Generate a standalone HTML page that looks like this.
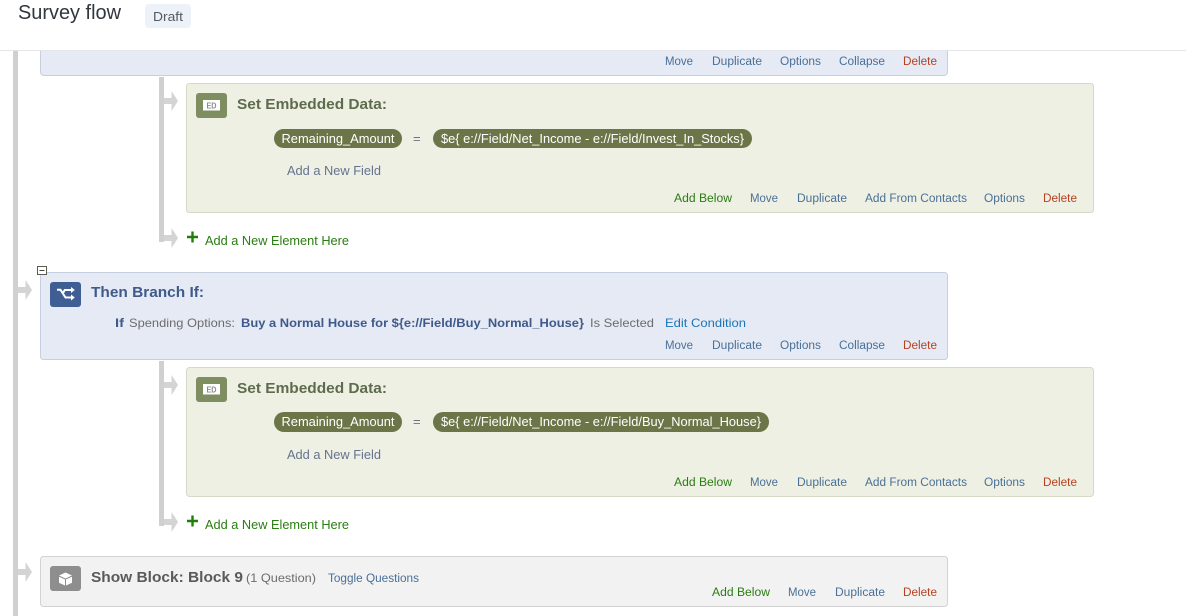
<!DOCTYPE html>
<html>
<head>
<meta charset="utf-8">
<style>
html,body{margin:0;padding:0;background:#fff;width:1186px;height:616px;overflow:hidden}
svg{display:block}
text{font-family:"Liberation Sans",sans-serif;white-space:pre}
.a{font-size:11.5px;fill:#4a7097}
.d{font-size:11.5px;fill:#b8401f}
.g{font-size:11.5px;fill:#2a7d12}
.h{font-size:15px;font-weight:bold}
.p{font-size:13px;fill:#fff}
.n{font-size:12.5px;fill:#66738f}
.e{font-size:12.5px;fill:#2a7d12}
</style>
</head>
<body>
<svg width="1186" height="616" viewBox="0 0 1186 616" xmlns="http://www.w3.org/2000/svg">
<rect width="1186" height="616" fill="#fff"/>

<!-- main rail -->
<rect x="13" y="51" width="5" height="565" fill="#d0d0d0"/>
<path d="M18 287h7.500v-7l6.500 10-6.500 10v-7h-7.500z" fill="#d4d4d4"/>
<path d="M18 569h7.500v-7l6.500 10-6.500 10v-7h-7.500z" fill="#d4d4d4"/>

<!-- top blue block -->
<path d="M40.500 50v22a3.500 3.500 0 0 0 3.500 3.500h900a3.500 3.500 0 0 0 3.500-3.500v-22z" fill="#e5eaf5" stroke="#c6cfe0"/>
<text class="a" x="665" y="65" textLength="28" lengthAdjust="spacingAndGlyphs">Move</text>
<text class="a" x="712" y="65" textLength="50" lengthAdjust="spacingAndGlyphs">Duplicate</text>
<text class="a" x="780" y="65" textLength="41" lengthAdjust="spacingAndGlyphs">Options</text>
<text class="a" x="839" y="65" textLength="46" lengthAdjust="spacingAndGlyphs">Collapse</text>
<text class="d" x="903" y="65" textLength="34" lengthAdjust="spacingAndGlyphs">Delete</text>

<!-- inner rail 1 -->
<rect x="159" y="77" width="5" height="165" fill="#d0d0d0"/>
<path d="M164 98h7.500v-7l6.500 10-6.500 10v-7h-7.500z" fill="#d4d4d4"/>
<path d="M164 235h7.500v-7l6.500 10-6.500 10v-7h-7.500z" fill="#d4d4d4"/>

<!-- ED block 1 -->
<rect x="186.500" y="83.500" width="907" height="129" rx="3" fill="#edf0e3" stroke="#d4dac6"/>
<rect x="196" y="93" width="31" height="25" rx="3" fill="#7f8e60"/>
<rect x="203" y="100" width="17" height="10.500" fill="#fff"/>
<text x="206.500" y="108.500" font-size="8.500" font-weight="bold" fill="#8b8b8b" textLength="10" lengthAdjust="spacingAndGlyphs">ED</text>
<text class="h" x="237" y="109" fill="#5f6b4d" textLength="150" lengthAdjust="spacingAndGlyphs">Set Embedded Data:</text>
<rect x="274" y="129" width="128" height="19" rx="9.500" fill="#6b7548"/>
<text class="p" x="281.500" y="143" textLength="113" lengthAdjust="spacingAndGlyphs">Remaining_Amount</text>
<text x="413" y="143" font-size="13" fill="#6b7280">=</text>
<rect x="433" y="129" width="319" height="19" rx="9.500" fill="#6b7548"/>
<text class="p" x="441" y="143" textLength="303" lengthAdjust="spacingAndGlyphs">$e{ e://Field/Net_Income - e://Field/Invest_In_Stocks}</text>
<text class="n" x="287" y="175" textLength="94" lengthAdjust="spacingAndGlyphs">Add a New Field</text>
<text class="g" x="674" y="202" textLength="58" lengthAdjust="spacingAndGlyphs">Add Below</text>
<text class="a" x="750" y="202" textLength="28" lengthAdjust="spacingAndGlyphs">Move</text>
<text class="a" x="797" y="202" textLength="50" lengthAdjust="spacingAndGlyphs">Duplicate</text>
<text class="a" x="865" y="202" textLength="102" lengthAdjust="spacingAndGlyphs">Add From Contacts</text>
<text class="a" x="984" y="202" textLength="41" lengthAdjust="spacingAndGlyphs">Options</text>
<text class="d" x="1043" y="202" textLength="34" lengthAdjust="spacingAndGlyphs">Delete</text>

<!-- add element 1 -->
<path d="M187 237h11M192.500 231.500v11" stroke="#1f7d0a" stroke-width="2.400" fill="none"/>
<text class="e" x="205" y="245" textLength="144" lengthAdjust="spacingAndGlyphs">Add a New Element Here</text>

<!-- Then branch -->
<rect x="40.500" y="272.500" width="907" height="87" rx="3" fill="#e5eaf5" stroke="#c6cfe0"/>
<rect x="37.500" y="266.500" width="9" height="8" fill="#fff" stroke="#5c5c50"/>
<path d="M39.500 270.500h5" stroke="#444" stroke-width="1"/>
<rect x="50" y="282" width="31" height="25" rx="3" fill="#3f5f94"/>
<path d="M57 289.800h3.500l5 7.700h6M62.800 293.200l2-3.200h6.500" fill="none" stroke="#fff" stroke-width="2"/>
<path d="M71 287l3.800 3-3.800 3zM71 294.500l3.800 3-3.800 3z" fill="#fff"/>
<text class="h" x="91" y="297" fill="#3f5a8a" textLength="113" lengthAdjust="spacingAndGlyphs">Then Branch If:</text>
<text x="115" y="327" font-size="12" font-weight="bold" fill="#3f5a8a" textLength="9" lengthAdjust="spacingAndGlyphs">If</text>
<text x="129" y="327" font-size="12" fill="#6c6c6c" textLength="106" lengthAdjust="spacingAndGlyphs">Spending Options:</text>
<text x="241" y="327" font-size="12" font-weight="bold" fill="#3f5a8a" textLength="343" lengthAdjust="spacingAndGlyphs">Buy a Normal House for ${e://Field/Buy_Normal_House}</text>
<text x="590" y="327" font-size="12" fill="#6c6c6c" textLength="64" lengthAdjust="spacingAndGlyphs">Is Selected</text>
<text x="665" y="327" font-size="12" fill="#1b75b5" textLength="81" lengthAdjust="spacingAndGlyphs">Edit Condition</text>
<text class="a" x="665" y="349" textLength="28" lengthAdjust="spacingAndGlyphs">Move</text>
<text class="a" x="712" y="349" textLength="50" lengthAdjust="spacingAndGlyphs">Duplicate</text>
<text class="a" x="780" y="349" textLength="41" lengthAdjust="spacingAndGlyphs">Options</text>
<text class="a" x="839" y="349" textLength="46" lengthAdjust="spacingAndGlyphs">Collapse</text>
<text class="d" x="903" y="349" textLength="34" lengthAdjust="spacingAndGlyphs">Delete</text>

<!-- inner rail 2 -->
<rect x="159" y="361" width="5" height="165" fill="#d0d0d0"/>
<path d="M164 382h7.500v-7l6.500 10-6.500 10v-7h-7.500z" fill="#d4d4d4"/>
<path d="M164 519h7.500v-7l6.500 10-6.500 10v-7h-7.500z" fill="#d4d4d4"/>

<!-- ED block 2 -->
<rect x="186.500" y="367.500" width="907" height="129" rx="3" fill="#edf0e3" stroke="#d4dac6"/>
<rect x="196" y="377" width="31" height="25" rx="3" fill="#7f8e60"/>
<rect x="203" y="384" width="17" height="10.500" fill="#fff"/>
<text x="206.500" y="392.500" font-size="8.500" font-weight="bold" fill="#8b8b8b" textLength="10" lengthAdjust="spacingAndGlyphs">ED</text>
<text class="h" x="237" y="393" fill="#5f6b4d" textLength="150" lengthAdjust="spacingAndGlyphs">Set Embedded Data:</text>
<rect x="274" y="412" width="128" height="20" rx="10" fill="#6b7548"/>
<text class="p" x="281.500" y="426" textLength="113" lengthAdjust="spacingAndGlyphs">Remaining_Amount</text>
<text x="413" y="426" font-size="13" fill="#6b7280">=</text>
<rect x="433" y="412" width="336" height="20" rx="10" fill="#6b7548"/>
<text class="p" x="441" y="426" textLength="320" lengthAdjust="spacingAndGlyphs">$e{ e://Field/Net_Income - e://Field/Buy_Normal_House}</text>
<text class="n" x="287" y="459" textLength="94" lengthAdjust="spacingAndGlyphs">Add a New Field</text>
<text class="g" x="674" y="486" textLength="58" lengthAdjust="spacingAndGlyphs">Add Below</text>
<text class="a" x="750" y="486" textLength="28" lengthAdjust="spacingAndGlyphs">Move</text>
<text class="a" x="797" y="486" textLength="50" lengthAdjust="spacingAndGlyphs">Duplicate</text>
<text class="a" x="865" y="486" textLength="102" lengthAdjust="spacingAndGlyphs">Add From Contacts</text>
<text class="a" x="984" y="486" textLength="41" lengthAdjust="spacingAndGlyphs">Options</text>
<text class="d" x="1043" y="486" textLength="34" lengthAdjust="spacingAndGlyphs">Delete</text>

<!-- add element 2 -->
<path d="M187 521h11M192.500 515.500v11" stroke="#1f7d0a" stroke-width="2.400" fill="none"/>
<text class="e" x="205" y="529" textLength="144" lengthAdjust="spacingAndGlyphs">Add a New Element Here</text>

<!-- Show block -->
<rect x="40.500" y="556.500" width="907" height="50" rx="3" fill="#f2f2f2" stroke="#d2d2d2"/>
<rect x="50" y="566" width="31" height="25" rx="3" fill="#8e8e8e"/>
<path d="M65.500 572.500l6.500 3-6.500 3-6.500-3z" fill="#fff"/>
<path d="M59 576.700l6 2.700v6.100l-6-2.800zM72 576.700l-6 2.700v6.100l6-2.800z" fill="#fff"/>
<text class="h" x="91" y="582" fill="#5a5a5a" textLength="152" lengthAdjust="spacingAndGlyphs">Show Block: Block 9</text>
<text x="246" y="582" font-size="12" fill="#6c6c6c" textLength="70" lengthAdjust="spacingAndGlyphs">(1 Question)</text>
<text class="a" x="328" y="582" textLength="91" lengthAdjust="spacingAndGlyphs">Toggle Questions</text>
<text class="g" x="712" y="596" textLength="58" lengthAdjust="spacingAndGlyphs">Add Below</text>
<text class="a" x="788" y="596" textLength="28" lengthAdjust="spacingAndGlyphs">Move</text>
<text class="a" x="835" y="596" textLength="50" lengthAdjust="spacingAndGlyphs">Duplicate</text>
<text class="d" x="903" y="596" textLength="34" lengthAdjust="spacingAndGlyphs">Delete</text>

<!-- header -->
<rect x="0" y="0" width="1186" height="50" fill="#fff"/>
<rect x="0" y="50" width="1186" height="1" fill="#e3e5e9"/>
<text x="18" y="19" font-size="20" fill="#32363d" textLength="103" lengthAdjust="spacingAndGlyphs">Survey flow</text>
<rect x="145" y="4" width="46" height="24" rx="4" fill="#edf2f8"/>
<text x="153" y="21" font-size="13" fill="#525962" textLength="30" lengthAdjust="spacingAndGlyphs">Draft</text>
</svg>
</body>
</html>
